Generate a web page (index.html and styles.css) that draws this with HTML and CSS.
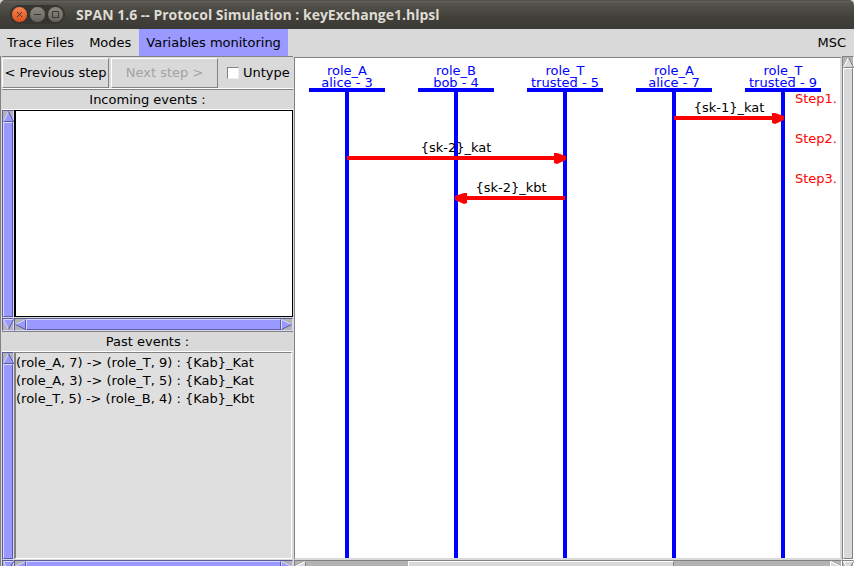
FILE: index.html
```html
<!DOCTYPE html>
<html lang="en">
<head>
<meta charset="utf-8">
<title>SPAN 1.6 -- Protocol Simulation : keyExchange1.hlpsl</title>
<link rel="stylesheet" href="styles.css">
</head>
<body>
<svg class="defs" aria-hidden="true">
  <defs>
    <symbol id="up" viewBox="0 0 11 11"><path class="face" d="M5.5 0 11 11H0z"/><path class="light" d="M.5 10.5 5.5 .5"/><path class="dark" d="M5.5 .5 10.5 10.5H.5"/></symbol>
    <symbol id="down" viewBox="0 0 11 11"><path class="face" d="M0 0H11L5.5 11z"/><path class="light" d="M10.5 .5H.5L5.5 10.5"/><path class="dark" d="M5.5 10.5 10.5 .5"/></symbol>
    <symbol id="left" viewBox="0 0 11 11"><path class="face" d="M0 5.5 11 0V11z"/><path class="light" d="M.5 5.5 10.5 .5"/><path class="dark" d="M10.5 .5V10.5L.5 5.5"/></symbol>
    <symbol id="right" viewBox="0 0 11 11"><path class="face" d="M0 0 11 5.5 0 11z"/><path class="light" d="M.5 10.5V.5L10.5 5.5"/><path class="dark" d="M10.5 5.5.5 10.5"/></symbol>
    <path id="head" d="M-11-5H-8L1-2V2L-8 6-11 5z"/>
    <path id="head-left" d="M11-5H8L-1-2V2L8 6 11 5z"/>
  </defs>
</svg>
<div class="window">
  <header class="titlebar">
    <div class="controls">
      <button class="control close" aria-label="Close"><svg viewBox="0 0 15 15"><path d="M5 5 10 10M10 5 5 10"/></svg></button>
      <button class="control" aria-label="Minimize"><svg viewBox="0 0 15 15"><path d="M4 7.5H11"/></svg></button>
      <button class="control" aria-label="Maximize"><svg viewBox="0 0 15 15"><path d="M4.5 4.5H10.5V10.5H4.5z"/></svg></button>
    </div>
    <h1>SPAN 1.6 -- Protocol Simulation : keyExchange1.hlpsl</h1>
  </header>
  <nav class="menubar">
    <button>Trace Files</button>
    <button>Modes</button>
    <button class="active">Variables monitoring</button>
    <button class="last">MSC</button>
  </nav>
  <main class="workspace">
    <section class="side">
      <div class="toolbar">
        <button class="step">&lt; Previous step</button>
        <button class="step" disabled>Next step &gt;</button>
        <label class="untype"><input type="checkbox"><span>Untype</span></label>
      </div>
      <h2>Incoming events :</h2>
      <div class="pane violet">
        <div class="bar vertical"><button aria-label="Scroll up"><svg><use href="#up"/></svg></button><div class="thumb"></div></div>
        <ul class="events focused"></ul>
        <button class="corner" aria-label="Scroll down"><svg><use href="#down"/></svg></button>
        <div class="bar horizontal"><button aria-label="Scroll left"><svg><use href="#left"/></svg></button><div class="thumb"></div><button aria-label="Scroll right"><svg><use href="#right"/></svg></button></div>
      </div>
      <h2>Past events :</h2>
      <div class="pane violet">
        <div class="bar vertical"><button aria-label="Scroll up"><svg><use href="#up"/></svg></button><div class="thumb"></div></div>
        <ul class="events past">
          <li>(role_A, 7) -&gt; (role_T, 9) : {Kab}_Kat</li>
          <li>(role_A, 3) -&gt; (role_T, 5) : {Kab}_Kat</li>
          <li>(role_T, 5) -&gt; (role_B, 4) : {Kab}_Kbt</li>
        </ul>
        <button class="corner" aria-label="Scroll down"><svg><use href="#down"/></svg></button>
        <div class="bar horizontal"><button aria-label="Scroll left"><svg><use href="#left"/></svg></button><div class="thumb"></div><button aria-label="Scroll right"><svg><use href="#right"/></svg></button></div>
      </div>
    </section>
    <section class="chart">
      <div class="canvas">
        <svg class="diagram" role="img" aria-label="Message sequence chart">
          <g class="life">
            <path d="M14 32H90M123 32H199M232 32H308M341 32H417M450 32H526"/>
            <line x1="52" y1="32" x2="52" y2="100%"/>
            <line x1="161" y1="32" x2="161" y2="100%"/>
            <line x1="270" y1="32" x2="270" y2="100%"/>
            <line x1="379" y1="32" x2="379" y2="100%"/>
            <line x1="488" y1="32" x2="488" y2="100%"/>
          </g>
          <g class="role">
            <text x="52" y="17">role_A</text><text x="52" y="29">alice - 3</text>
            <text x="161" y="17">role_B</text><text x="161" y="29">bob - 4</text>
            <text x="270" y="17">role_T</text><text x="270" y="29">trusted - 5</text>
            <text x="379" y="17">role_A</text><text x="379" y="29">alice - 7</text>
            <text x="488" y="17">role_T</text><text x="488" y="29">trusted - 9</text>
          </g>
          <g class="arrow">
            <path d="M379 60H480M52 100H262M270 140H169"/>
            <use href="#head" x="488" y="60"/>
            <use href="#head" x="270" y="100"/>
            <use href="#head-left" x="161" y="140"/>
          </g>
          <g class="message">
            <text x="434" y="54">{sk-1}_kat</text>
            <text x="161" y="94">{sk-2}_kat</text>
            <text x="216" y="134">{sk-2}_kbt</text>
          </g>
          <g class="mark">
            <text x="500" y="45">Step1.</text>
            <text x="500" y="85">Step2.</text>
            <text x="500" y="125">Step3.</text>
          </g>
        </svg>
      </div>
      <div class="bar vertical"><button aria-label="Scroll up"><svg><use href="#up"/></svg></button><div class="thumb"></div></div>
      <div class="bar horizontal"><button aria-label="Scroll left"><svg><use href="#left"/></svg></button><div class="gap"></div><div class="thumb"></div><div class="gap wide"></div><button aria-label="Scroll right"><svg><use href="#right"/></svg></button></div>
      <button class="corner" aria-label="Scroll down"><svg><use href="#down"/></svg></button>
    </section>
  </main>
</div>
</body>
</html>
```
FILE: styles.css
```css
* { box-sizing: border-box; }
html, body { height: 100%; margin: 0; overflow: hidden; background: #3c3b37; }
body, button { font: 13px/18px "DejaVu Sans", sans-serif; color: #000; }
button { margin: 0; padding: 0; border: 0; background: none; }
h1, h2, ul { margin: 0; padding: 0; font-weight: normal; list-style: none; }
svg { display: block; }
.defs { position: absolute; width: 0; height: 0; }

/* The lower scrollbars run past the bottom edge of the screen. */
.window { display: flex; flex-direction: column; height: calc(100vh + 7px); background: #d9d9d9; }

.titlebar {
  display: flex; align-items: center; gap: 11px; flex: none; height: 29px; padding-left: 10px;
  background: linear-gradient(#3c3b37 0, #65635c 1px, #55534d 3px, #403f3a 18px, #3c3b37);
  border-radius: 5px 5px 0 0;
}
.titlebar h1 { font: bold 14px/20px "Open Sans", "Noto Sans", sans-serif; color: #dfdbd2; white-space: nowrap; }
.controls { display: flex; gap: 1px; padding: 1px; border-radius: 9px; background: #35342f; }
.control { width: 17px; height: 17px; border-radius: 50%; background: linear-gradient(#8b897f, #65635b); border: 1px solid #35342f; }
.control.close { background: linear-gradient(#f7824f, #e0501c); }
.control svg { width: 15px; height: 15px; fill: none; stroke: #393832; stroke-width: 1; }

.menubar { display: flex; gap: 1px; flex: none; height: 27px; padding-right: 1px; }
.menubar button { padding: 0 7px; }
.menubar .active { background: #9999ff; }
.menubar .last { margin-left: auto; }

.workspace { display: grid; grid-template-columns: 293px 1fr; flex: 1; min-height: 0; border-left: 1px solid #828282; }
.side { display: flex; flex-direction: column; min-width: 0; min-height: 0; padding: 0 1px; }
.toolbar { display: flex; align-items: center; gap: 2px; flex: none; height: 33px; border-top: 1px solid #828282; border-bottom: 1px solid #fff; }
.step { width: 107px; height: 30px; border: 1px solid; border-color: #fff #828282 #828282 #fff; white-space: nowrap; }
.step:disabled { color: #a3a3a3; }
.untype { display: flex; align-items: center; gap: 4px; margin-left: 7px; }
.untype input { appearance: none; width: 12px; height: 12px; margin: 0; background: #fff; border: 1px solid; border-color: #828282 #eee #eee #828282; }
.side h2 { flex: none; height: 21px; font-size: 13px; line-height: 20px; text-align: center; border-top: 1px solid #828282; border-bottom: 1px solid #fff; }

.pane { display: grid; flex: 1; grid-template: 1fr 13px / 12px 1fr; min-height: 0; }
.events { min-height: 0; border: 1px solid; overflow: hidden; }
.focused { background: #fff; border-color: #000; border-width: 1px 1px 1px 2px; margin-bottom: 1px; }
.past { padding-top: 1px; background: #dfdfdf; border-color: #828282 #fff #fff #828282; border-left-width: 2px; margin: 0 1px 1px 0; }
.past li { white-space: nowrap; }

.bar, .corner { background: #b3b3b3; border: 1px solid; --face: #d9d9d9; --light: #fff; --dark: #828282; border-color: var(--dark) var(--light) var(--light) var(--dark); }
.violet .bar, .violet .corner { --face: #9999ff; --light: #d6d6ff; --dark: #5c5c99; }
.bar { display: flex; min-width: 0; min-height: 0; }
.bar.vertical { flex-direction: column; }
.bar button, .corner { flex: none; }
.bar svg, .corner svg { width: 11px; height: 11px; }
.thumb { flex: 1; background: var(--face); border: 1px solid; border-color: var(--light) var(--dark) var(--dark) var(--light); }
.face { fill: var(--face); }
.light { fill: none; stroke: var(--light); }
.dark { fill: none; stroke: var(--dark); }

.chart { display: grid; grid-template: 1fr 13px / 1fr 12px; min-width: 0; min-height: 0; }
.canvas { min-width: 0; min-height: 0; background: #fff; border: 1px solid; border-color: #828282 #d9d9d9 #d9d9d9 #828282; border-right-width: 2px; border-bottom-width: 2px; margin-top: 1px; }
.diagram { width: 100%; height: 100%; }
.life { stroke: #00f; stroke-width: 4; }
.life path, .arrow path { fill: none; }
.role { fill: #00f; text-anchor: middle; }
.arrow { stroke: #f00; stroke-width: 4; }
.arrow use { stroke: none; fill: #f00; }
.message { text-anchor: middle; }
.mark { fill: #f00; }
.gap { flex: 102; }
.chart .horizontal .thumb { flex: 265; }
.gap.wide { flex: 157; }
```
